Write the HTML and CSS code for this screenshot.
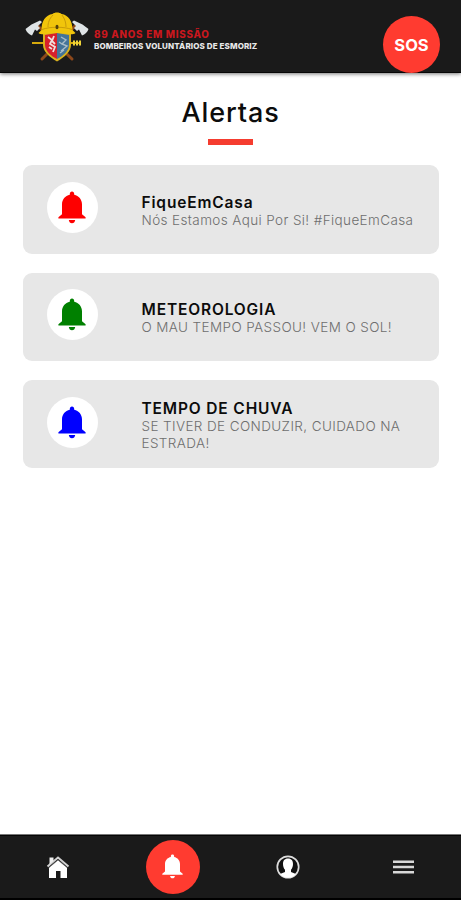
FILE: index.html
```html
<!DOCTYPE html>
<html lang="pt">
<head>
<meta charset="utf-8">
<title>Alertas</title>
<link rel="stylesheet" href="styles.css">
</head>
<body>
<svg class="defs" width="0" height="0" aria-hidden="true">
  <symbol id="bell" viewBox="0 0 28 33">
    <path d="M14 0.5c1.300 0 2.200.9 2.200 2.400v.8c4.600 1 7.800 4.600 7.800 9.600v10l3.600 3v1.300H.4v-1.300l3.600-3v-10c0-5 3.200-8.600 7.800-9.600v-.8C11.800 1.400 12.700.5 14 .5zM10.800 29h6.400c-.2 2-1.600 3.300-3.200 3.300S11 31 10.800 29z"/>
  </symbol>
</svg>
<header class="topbar">
  <svg class="crest" viewBox="0 0 64 52">
    <g stroke="#8d481b" stroke-width="3" stroke-linecap="round">
      <path d="M17 48L50 15M47 48L13 15"/>
    </g>
    <path d="M.5 18l6-4.500L15 9.500l2 1.500-4 4 2 2-3 3-2-1.500-3 6c-3-1-5.500-3.500-6.500-6.500z" fill="#dfe4e6"/>
    <path d="M63.500 18l-6-4.500L49 9.500l-2 1.500 4 4-2 2 3 3 2-1.500 3 6c3-1 5.500-3.500 6.500-6.500z" fill="#dfe4e6"/>
    <path d="M7 32h49" stroke="#d5a90c" stroke-width="2.200"/>
    <path d="M49 29.500v5M52 29.500v5M55 29.500v5" stroke="#efd43a" stroke-width="2"/>
    <path d="M18 22c4-2 24-2 28 0v12c0 6-6 12-14 16.500C24 46 18 40 18 34z" fill="#d9b21e"/>
    <path d="M20 24l12-2v26c-6-3-12-8-12-14z" fill="#d7202c"/>
    <path d="M32 22l12 2v10c0 6-6 11-12 14z" fill="#447499"/>
    <path d="M23 26l4 3-2 4 5 3-2 5M29 25l-2 5 3 3M24 36l3 2" stroke="#f0dfdd" stroke-width="1.800" fill="none"/>
    <path d="M36 26l5 3-4 4 5 2-6 5M34 31l3 2M35 42l4-3" stroke="#a9bcc8" stroke-width="1.400" fill="none"/>
    <path d="M13.500 22l3-3c0-9 4-15 11-16 2-2 7-2 9 0 7 1 11 7 11 16l3 3c-4 3-9 0-18.500 0s-14.500 3-18.500 0z" fill="#f1c50b"/>
    <path d="M17 18.500c8-3 22-3 30 0M28 4c-4 4-5 8-5 12M37 4c3 4 4 8 4 12" fill="none" stroke="#c99b08" stroke-width="1"/>
    <ellipse cx="32" cy="16" rx="1.500" ry="2.300" fill="#544109"/>
  </svg>
  <div class="brand">
    <div class="brand-years">89 ANOS EM MISSÃO</div>
    <div class="brand-name">BOMBEIROS VOLUNTÁRIOS DE ESMORIZ</div>
  </div>
  <div class="sos">SOS</div>
</header>
<main>
  <h1>Alertas</h1>
  <div class="rule"></div>
  <section class="alerts">
    <article class="card">
      <div class="badge red"><svg><use href="#bell"/></svg></div>
      <div class="copy"><h2>FiqueEmCasa</h2><p>Nós Estamos Aqui Por Si! #FiqueEmCasa</p></div>
    </article>
    <article class="card">
      <div class="badge green"><svg><use href="#bell"/></svg></div>
      <div class="copy"><h2>METEOROLOGIA</h2><p>O MAU TEMPO PASSOU! VEM O SOL!</p></div>
    </article>
    <article class="card">
      <div class="badge blue"><svg><use href="#bell"/></svg></div>
      <div class="copy"><h2>TEMPO DE CHUVA</h2><p>SE TIVER DE CONDUZIR, CUIDADO NA<br>ESTRADA!</p></div>
    </article>
  </section>
</main>
<nav class="tabs">
  <div class="tab">
    <svg class="home" viewBox="0 0 24 24"><path d="M3 12.500L12 5l9 7.500V23h-6.500v-7h-4.500v7H3z" fill="#fff"/><path d="M1.500 11.500L12 2.500l10.500 9" fill="none" stroke="#d2d2d2" stroke-width="2"/><path d="M3.500 2.500h4v3.500l-4 3.500z" fill="#eee"/><path d="M2.500 13L12 5l9.500 8" fill="none" stroke="#555" stroke-width=".7"/></svg>
  </div>
  <div class="tab"><div class="current"><svg><use href="#bell"/></svg></div></div>
  <div class="tab">
    <svg class="user" viewBox="0 0 24 24"><circle cx="12" cy="12" r="10.700" fill="#111" stroke="#ddd" stroke-width="1.700"/><path d="M12 3.500c3.500 0 5 2.300 5 5.500 0 2.600-.8 4.500-2 5.700v2.300l5 2c-2 2.500-5 3.700-8 3.700S6 21.500 4 19l5-2v-2.300C7.800 13.500 7 11.600 7 9c0-3.200 1.500-5.500 5-5.500z" fill="#fff"/></svg>
  </div>
  <div class="tab">
    <svg class="menu" viewBox="0 0 21 14"><path d="M0 1.700h21M0 7h21M0 12.300h21" stroke="#d8d8d8" stroke-width="2.400"/></svg>
  </div>
</nav>
</body>
</html>
```
FILE: styles.css
```css
* { box-sizing: border-box; }
body {
  margin: 0;
  height: 900px;
  display: flex;
  flex-direction: column;
  overflow: hidden;
  background: #fff;
  color: #0c0c0c;
  font-family: Inter, "Open Sans", sans-serif;
}
h1, h2, p { margin: 0; white-space: nowrap; }
.defs { position: absolute; }
.topbar {
  flex: none;
  height: 73px;
  display: flex;
  align-items: flex-start;
  padding-left: 25px;
  background: #1a1a1a;
  border-bottom: 1px solid #060606;
  box-shadow: 0 1px 4px rgba(0, 0, 0, .55);
}
.crest { width: 64px; height: 52px; margin-top: 11px; }
.brand { margin: 29px 0 0 5px; font-weight: 800; white-space: nowrap; }
.brand-years { color: #c9171e; font-size: 9.800px; line-height: 12px; letter-spacing: .73px; }
.brand-name { color: #e8e8e8; font-size: 8px; line-height: 10px; letter-spacing: .12px; }
.sos {
  position: absolute;
  left: 383px;
  top: 16px;
  width: 57px;
  height: 57px;
  border-radius: 50%;
  background: #ff3b30;
  color: #fff;
  font-size: 16.500px;
  font-weight: 700;
  line-height: 59px;
  text-align: center;
}
main { flex: 1; display: flex; flex-direction: column; align-items: center; }
h1 {
  margin-top: 22.500px;
  font-size: 27px;
  line-height: 34px;
  font-weight: 500;
  letter-spacing: .9px;
}
.rule { width: 45px; height: 6px; margin-top: 9.500px; background: #f53c2f; }
.alerts { width: 416px; margin-top: 20.400px; display: flex; flex-direction: column; gap: 18.500px; }
.card {
  height: 88.700px;
  display: flex;
  align-items: center;
  padding-left: 24px;
  border-radius: 9px;
  background: #e7e7e7;
}
.badge {
  width: 51px;
  height: 51px;
  margin-top: -4px;
  display: flex;
  align-items: center;
  justify-content: center;
  border-radius: 50%;
  background: #fff;
}
.badge svg { width: 28px; height: 33px; }
.red { fill: #fe0000; }
.green { fill: #008000; }
.blue { fill: #00f; }
.copy { margin: 2px 0 0 44px; }
h2 { font-size: 15.500px; line-height: 19px; font-weight: 600; letter-spacing: .85px; }
p { font-size: 13.500px; line-height: 16.500px; font-weight: 300; letter-spacing: .39px; color: #6e6e6e; }
.tabs {
  flex: none;
  height: 66px;
  display: grid;
  grid-template-columns: repeat(4, 1fr);
  background: #1a1a1a;
  border-top: 1px solid #777;
  border-bottom: 2px solid #000;
  box-shadow: inset 0 1px #050505;
}
.tab { display: flex; align-items: center; justify-content: center; }
.home, .user { width: 24px; height: 24px; }
.menu { width: 21px; height: 14px; }
.current {
  width: 54px;
  height: 54px;
  display: flex;
  align-items: center;
  justify-content: center;
  border-radius: 50%;
  background: #ff3b30;
  fill: #fff;
}
.current svg { width: 21px; height: 25px; }
```
